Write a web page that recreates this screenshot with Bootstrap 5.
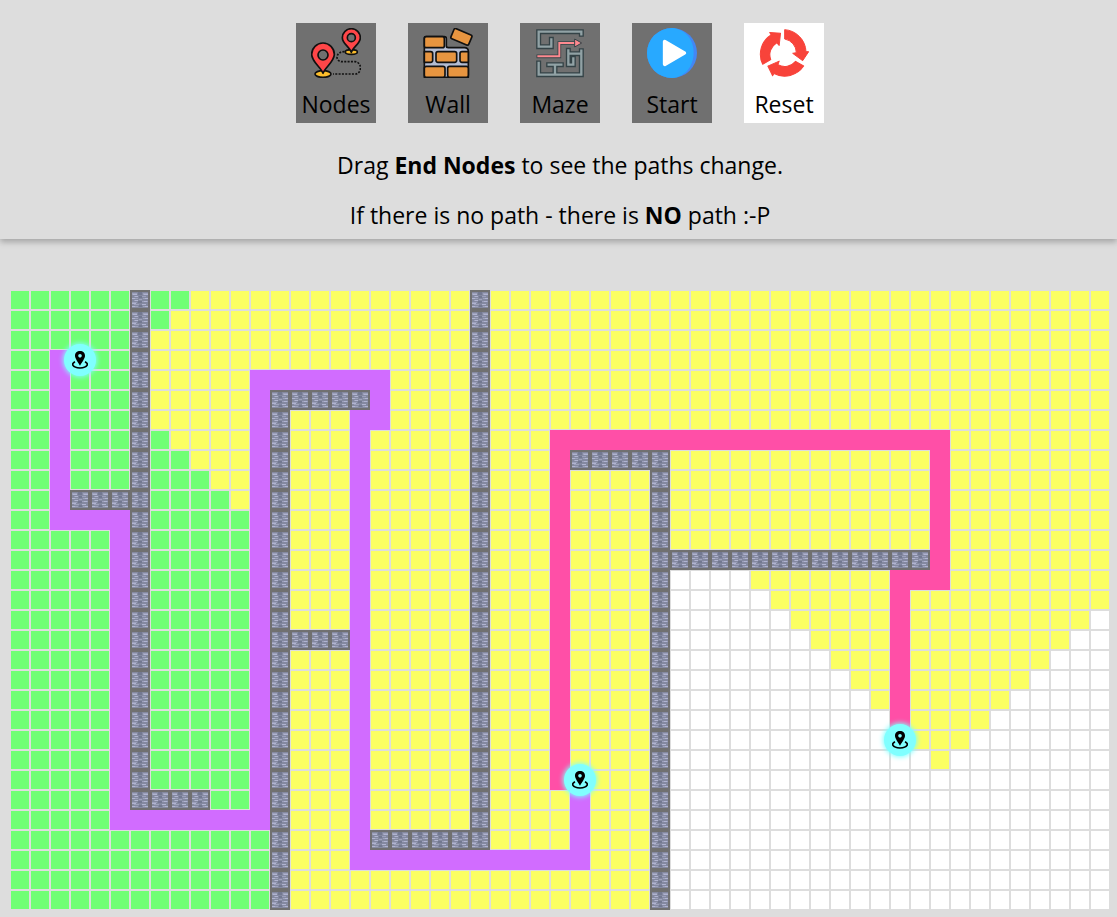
<!DOCTYPE html>
<html lang="en">
<head>
<meta charset="utf-8">
<meta name="viewport" content="width=device-width, initial-scale=1">
<title>Path Finder</title>
<link href="https://cdn.jsdelivr.net/npm/bootstrap@5.3.0/dist/css/bootstrap.min.css" rel="stylesheet">
<style>
  body { background: #ddd; color: #000; font-family: "Open Sans", "Noto Sans", sans-serif; }
  .toolbar-area { padding: 23px 7px 9px 10px; box-shadow: 0 3px 6px rgba(0,0,0,.26); background: #ddd; font-size: 23px; line-height: 30px; }
  .tools { gap: 32px; margin-bottom: 27px; }
  .tool { width: 80px; height: 100px; padding: 5px 0 0; border: 0; background: #707070; color: #000; font-size: 23px; line-height: 30px; }
  .tool.ready { background: #fff; }
  .tool svg { width: 50px; height: 50px; margin-bottom: 11px; }
  .hints { gap: 20px; }
  .board-area { padding: 51px 7px 7px 10px; }
  .board { display: grid; grid-template-columns: repeat(55, minmax(0, 1fr)); }
  .cell { aspect-ratio: 1; border: 1px solid #ddd; background: #fff; position: relative; }
  .cell.near { background: #6fff74; }
  .cell.far { background: #fbff62; }
  .cell.route-a { background: #d16cff; border-color: #d16cff; }
  .cell.route-b { background: #ff4fa7; border-color: #ff4fa7; }
  .cell.brick { background: #707070; border-color: #707070; }
  .brick svg { display: block; width: 100%; height: 100%; }
  .marker { position: absolute; z-index: 1; top: 50%; left: 50%; width: 32px; height: 32px; transform: translate(-50%, -50%); border-radius: 50%; background: #80ffff; box-shadow: 0 0 5px 1px #80ffff; }
  .marker svg { width: 16px; height: 18px; }
</style>
</head>
<body>
<svg class="d-none" aria-hidden="true">
  <symbol id="bricks" viewBox="0 0 18 18">
    <path fill="#8489a0" d="M1 1h16v16H1z"/>
    <path fill="#9da1bb" d="M1 2h5v2H1zM12 2h5v2h-5zM3 5h4v1H3zM11 5h4v1h-4zM1 7h6v1H1zM12 7h5v1h-5zM3 9h4v1H3zM8 8h3v1H8zM11 10h6v1h-6zM1 11h5v1H1zM3 13h5v1H3zM11 13h4v1h-4zM1 15h6v1H1zM12 15h5v1h-5z"/>
    <path fill="#737991" d="M7 1h4v3H7zM8 5h3v2H8zM7 10h4v2H7zM8 14h3v2H8z"/>
    <path fill="#b1b4d1" d="M2 3h4v1H2zM13 3h4v1h-4zM4 5h3v1H4zM1 7h3v1H1zM14 7h3v1h-3zM4 9h3v1H4zM13 10h3v1h-3zM1 12h4v1H1zM11 13h4v1h-4zM1 15h3v1H1zM14 15h3v1h-3z"/>
  </symbol>
  <symbol id="place" viewBox="0 0 48 54">
    <path fill-rule="evenodd" d="M24 0C15 0 9 6 9 14c0 9 10 20 15 30 5-10 15-21 15-30C39 6 33 0 24 0zm0 9a5.500 5.500 0 1 1 0 11 5.500 5.500 0 0 1 0-11z"/>
    <path d="M9 32C-3 38 0 49 24 51 48 49 51 38 39 32" fill="none" stroke="#000" stroke-width="5"/>
  </symbol>
</svg>

<header class="toolbar-area text-center">
  <nav class="tools d-flex flex-wrap justify-content-center" aria-label="Tools">
    <button type="button" class="tool d-flex flex-column align-items-center">
      <svg viewBox="0 0 150 150" aria-hidden="true" stroke="#111" stroke-width="5" stroke-linejoin="round">
        <path d="M101 71C76 70 70 96 90 101H132C155 103 152 137 134 138H66" fill="none" stroke-dasharray="6 4"/>
        <ellipse cx="36" cy="138" rx="24" ry="10" fill="#fdbe2c"/>
        <path d="M36 136C29 117 2 101 2 79a34 34 0 0 1 68 0C70 101 43 117 36 136z" fill="#ff4648"/>
        <circle cx="36" cy="81" r="15" fill="#707070"/>
        <ellipse cx="121" cy="72" rx="18" ry="7" fill="#fdbe2c"/>
        <path d="M121 73C117 57 94 48 94 29a27 27 0 0 1 54 0C148 48 125 57 121 73z" fill="#ff4648"/>
        <circle cx="121" cy="29" r="12" fill="#707070"/>
      </svg>
      <span>Nodes</span>
    </button>
    <button type="button" class="tool d-flex flex-column align-items-center">
      <svg viewBox="0 0 150 150" aria-hidden="true" stroke="#111" stroke-width="5" stroke-linejoin="round">
        <path d="M4 30Q4 26 8 26H64Q70 26 70 32V54Q70 59 76 59H124Q136 59 136 70V148H4z" fill="#b4bdd3"/>
        <g fill="#e79540">
          <rect x="4" y="26" width="60" height="33" rx="6"/>
          <path d="M4 71H23Q29 71 29 77V97Q29 103 23 103H4z"/>
          <rect x="39" y="71" width="62" height="32" rx="6"/>
          <path d="M136 71H117Q111 71 111 77V97Q111 103 117 103H136z"/>
          <rect x="4" y="115" width="62" height="33" rx="6"/>
          <rect x="74" y="115" width="62" height="33" rx="6"/>
          <rect x="86" y="10" width="58" height="33" rx="5" transform="rotate(23 115 27)"/>
        </g>
      </svg>
      <span>Wall</span>
    </button>
    <button type="button" class="tool d-flex flex-column align-items-center">
      <svg viewBox="0 0 150 150" aria-hidden="true">
        <g fill="none" stroke-linecap="square">
          <path stroke="#344347" stroke-width="15" d="M139 19V11H11V56H49V34M11 105V140H139V68M41 110H79M60 110V138M100 67V110H115V91M100 77H137"/>
          <path stroke="#91a2a5" stroke-width="7" d="M139 19V11H11V56H49V34M11 105V140H139V68M41 110H79M60 110V138M100 67V110H115V91M100 77H137"/>
          <path d="M10 85H73V45H118" stroke="#344347" stroke-width="11"/>
          <path d="M10 85H73V45H118" stroke="#ff8a90" stroke-width="6"/>
        </g>
        <path d="M119 33L140 45 119 57z" fill="#ff8a90" stroke="#344347" stroke-width="3"/>
      </svg>
      <span>Maze</span>
    </button>
    <button type="button" class="tool d-flex flex-column align-items-center">
      <svg viewBox="0 0 150 150" aria-hidden="true">
        <circle cx="75" cy="75" r="75" fill="#4387f4"/>
        <path d="M75 0a75 75 0 0 0 0 150C160 143 163 7 75 0z" fill="#28a9ff"/>
        <path d="M53 41V109L112 75z" fill="#fff" stroke="#fff" stroke-width="11" stroke-linejoin="round"/>
      </svg>
      <span>Start</span>
    </button>
    <button type="button" class="tool ready d-flex flex-column align-items-center">
      <svg viewBox="0 0 150 150" aria-hidden="true" fill="#f8433a" stroke="#f8433a" stroke-width="3" stroke-linejoin="round">
        <path id="turn" d="M77 5A69 69 0 0 1 141 71L149 71 131 98 101 76 112 74A42 42 0 0 0 77 33z"/>
        <use href="#turn" transform="rotate(120 74 76)"/>
        <use href="#turn" transform="rotate(240 74 76)"/>
      </svg>
      <span>Reset</span>
    </button>
  </nav>
  <div class="hints d-flex flex-column">
    <p class="m-0">Drag <b>End Nodes</b> to see the paths change.</p>
    <p class="m-0">If there is no path - there is <b>NO</b> path :-P</p>
  </div>
</header>

<main class="board-area">
  <div class="board" id="board"></div>
</main>

<script src="https://cdn.jsdelivr.net/npm/bootstrap@5.3.0/dist/js/bootstrap.bundle.min.js"></script>
<script>
  const COLS = 55, ROWS = 31;
  // Straight runs of cells: [first column, first row, last column, last row]
  const walls = [[6,0,6,25],[6,25,9,25],[3,10,5,10],[13,5,13,30],[13,5,17,5],[14,17,16,17],
    [23,0,23,27],[18,27,23,27],[28,8,32,8],[32,8,32,30],[33,13,45,13]];
  const routeA = [[2,3,2,11],[2,11,5,11],[5,11,5,26],[5,26,12,26],[12,4,12,26],[12,4,18,4],
    [18,4,18,6],[17,6,18,6],[17,6,17,28],[17,28,28,28],[28,25,28,28]];
  const routeB = [[27,7,27,24],[27,7,46,7],[46,7,46,14],[44,14,46,14],[44,14,44,21]];
  const nodes = ['3,3', '28,24', '44,22'];
  const within = (runs, c, r) => runs.some(([a, b, x, y]) => c >= a && c <= x && r >= b && r <= y);

  // How far the search has reached: near the first node, beyond it, or not at all
  function reached(c, r) {
    if (c < 6 || (c < 13 && r > 25)) return 'near';
    if (c < 12 && (c <= 8 - r || (r > 6 && c <= r))) return 'near';
    if (c > 32 && r > 13 && (c < 23 + r || c > 69 - r)) return '';
    return 'far';
  }

  let html = '';
  for (let r = 0; r < ROWS; r++) {
    for (let c = 0; c < COLS; c++) {
      let kind = reached(c, r), inner = '';
      if (within(walls, c, r)) { kind = 'brick'; inner = '<svg aria-hidden="true"><use href="#bricks"/></svg>'; }
      else if (within(routeA, c, r)) kind = 'route-a';
      else if (within(routeB, c, r)) kind = 'route-b';
      if (nodes.includes(c + ',' + r)) {
        inner = '<span class="marker d-flex align-items-center justify-content-center" draggable="true"><svg aria-hidden="true"><use href="#place"/></svg></span>';
      }
      html += '<div class="cell ' + kind + '">' + inner + '</div>';
    }
  }
  document.getElementById('board').innerHTML = html;
</script>
</body>
</html>
